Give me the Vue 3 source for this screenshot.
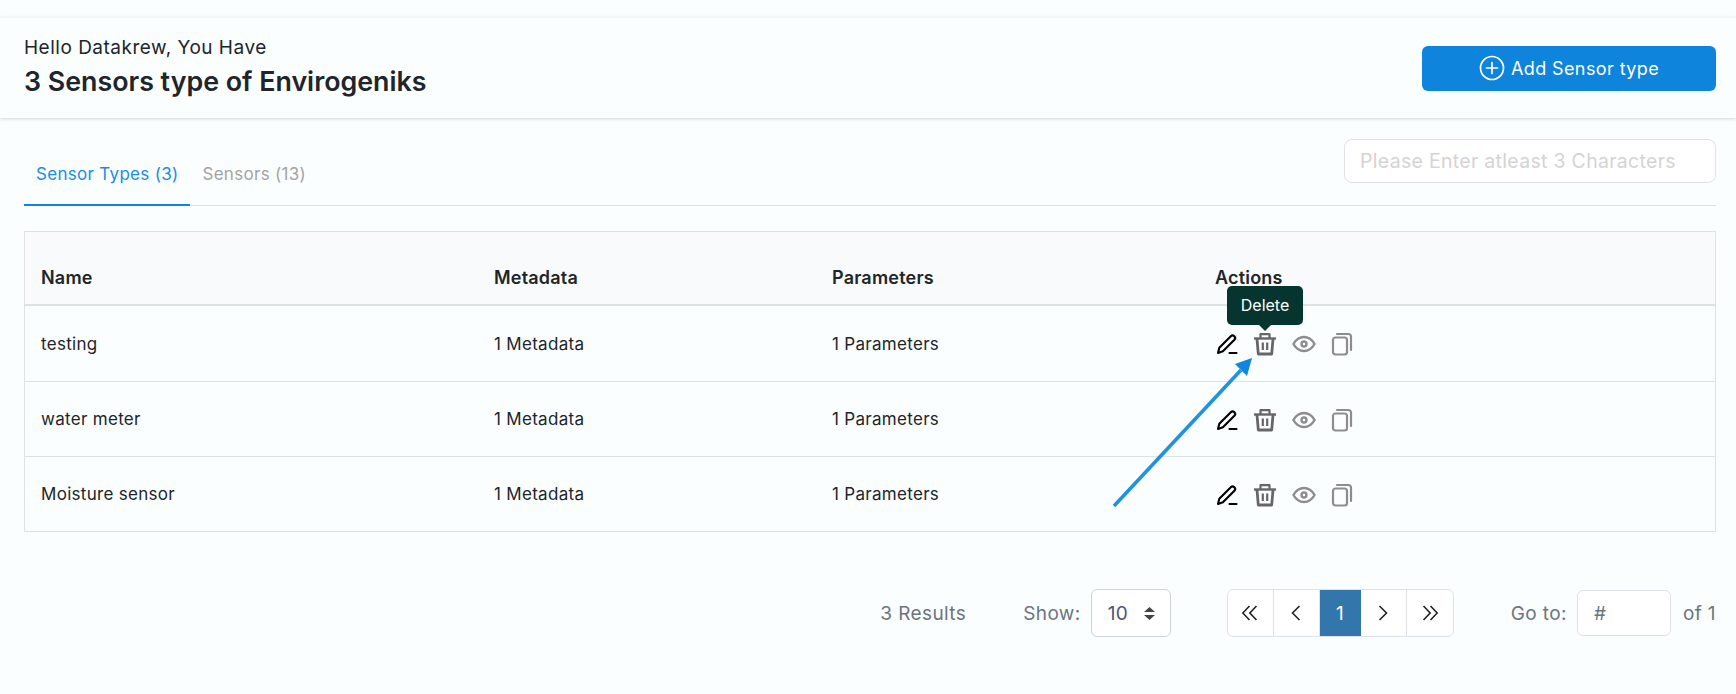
<script setup>
const sensorTypes = [
  { id: 1, name: 'testing', metadata: '1 Metadata', parameters: '1 Parameters' },
  { id: 2, name: 'water meter', metadata: '1 Metadata', parameters: '1 Parameters' },
  { id: 3, name: 'Moisture sensor', metadata: '1 Metadata', parameters: '1 Parameters' },
]
</script>

<template>
  <div class="page">
    <header class="top">
      <div class="top__text">
        <p class="top__hello">Hello Datakrew, You Have</p>
        <h1 class="top__title">3 Sensors type of Envirogeniks</h1>
      </div>
      <button class="add-btn" type="button">
        <svg class="add-btn__icon" viewBox="0 0 26 26" fill="none" stroke="currentColor" stroke-width="1.7" stroke-linecap="round" aria-hidden="true">
          <circle cx="13" cy="13" r="11.5" />
          <path d="M13 7.5v11M7.5 13h11" />
        </svg>
        <span>Add Sensor type</span>
      </button>
    </header>

    <main class="content">
      <div class="tabs">
        <div class="tabs__list">
          <span class="tab tab--active">Sensor Types (3)</span>
          <span class="tab">Sensors (13)</span>
        </div>
        <input class="search" type="text" placeholder="Please Enter atleast 3 Characters" />
      </div>

      <section class="table">
        <div class="row row--head">
          <span>Name</span>
          <span>Metadata</span>
          <span>Parameters</span>
          <span>Actions</span>
        </div>
        <div v-for="(item, index) in sensorTypes" :key="item.id" class="row">
          <span>{{ item.name }}</span>
          <span>{{ item.metadata }}</span>
          <span>{{ item.parameters }}</span>
          <div class="actions">
            <svg class="icon" viewBox="0 0 24 24" fill="none" stroke="#000" stroke-width="2.1" stroke-linecap="round" stroke-linejoin="round" aria-hidden="true">
              <path d="M3 21l1.300-5.200L15.800 4.200a2.500 2.500 0 0 1 3.600 3.500L7.900 19.300 3 21z" />
              <path d="M14.500 21h7" />
            </svg>
            <span class="action-del">
              <span v-if="index === 0" class="tooltip">Delete</span>
              <svg class="icon" viewBox="0 0 24 24" fill="none" stroke="#666" stroke-width="2.800" stroke-linejoin="round" aria-hidden="true">
                <path d="M1 6.500h22" stroke-width="2.400" />
                <path d="M7.500 6V2.200h9V6" stroke-width="2.200" />
                <path d="M4 7l1.300 15h13.400L20 7" />
                <path d="M9.800 10.500v7.500M14.200 10.500v7.500" stroke-width="2.200" />
              </svg>
            </span>
            <svg class="icon" viewBox="0 0 24 24" fill="none" stroke="#8d8d8d" stroke-width="2.400" aria-hidden="true">
              <path d="M1.400 12C4 7.500 7.700 5 12 5s8 2.500 10.600 7C20 16.500 16.300 19 12 19S4 16.500 1.400 12z" />
              <circle cx="12" cy="12" r="2.500" />
            </svg>
            <svg class="icon" viewBox="0 0 24 24" fill="none" stroke="#8d8d8d" stroke-width="2.200" stroke-linecap="round" aria-hidden="true">
              <rect x="3" y="5.500" width="14" height="17" rx="2.500" />
              <path d="M7 2h11.500A2.500 2.500 0 0 1 21 4.500V18" />
            </svg>
          </div>
        </div>
      </section>

      <footer class="pager">
        <span class="pager__results">3 Results</span>
        <span class="pager__show">Show:</span>
        <div class="pager__select">
          <span>10</span>
          <svg width="11" height="13" viewBox="0 0 11 13" fill="#444" aria-hidden="true">
            <path d="M5.500 0L11 5H0zM5.500 13L0 8h11z" />
          </svg>
        </div>
        <nav class="pager__pages">
          <span class="page-btn">
            <svg viewBox="0 0 16 16" fill="none" stroke="#222" stroke-width="1.600" aria-hidden="true"><path d="M7.500 1L.8 8l6.700 7M14.500 1L7.800 8l6.700 7" /></svg>
          </span>
          <span class="page-btn">
            <svg viewBox="0 0 16 16" fill="none" stroke="#222" stroke-width="1.600" aria-hidden="true"><path d="M11.500 1L4.500 8l7 7" /></svg>
          </span>
          <span class="page-btn page-btn--current">1</span>
          <span class="page-btn">
            <svg viewBox="0 0 16 16" fill="none" stroke="#222" stroke-width="1.600" aria-hidden="true"><path d="M4.500 1l7 7-7 7" /></svg>
          </span>
          <span class="page-btn">
            <svg viewBox="0 0 16 16" fill="none" stroke="#222" stroke-width="1.600" aria-hidden="true"><path d="M1.500 1l6.700 7-6.700 7M8.500 1l6.700 7-6.700 7" /></svg>
          </span>
        </nav>
        <span class="pager__goto">Go to:</span>
        <input class="pager__input" type="text" placeholder="#" />
        <span class="pager__of">of 1</span>
      </footer>
    </main>

    <svg class="arrow" width="160" height="160" viewBox="0 0 160 160" aria-hidden="true">
      <path d="M4 148L131 12" stroke="#2093e0" stroke-width="3.600" fill="none" />
      <path d="M142 0L125 6l12 12z" fill="#1087dd" />
    </svg>
  </div>
</template>

<style>
html,
body {
  margin: 0;
  background: #fbfeff;
}
</style>

<style scoped>
.page {
  position: relative;
  width: 1736px;
  height: 694px;
  overflow: hidden;
  padding-top: 17px;
  box-sizing: border-box;
  background: #fbfeff;
  color: #212529;
  font-family: Inter, 'Liberation Sans', sans-serif;
}

.top {
  display: flex;
  align-items: center;
  justify-content: space-between;
  height: 101px;
  padding: 0 20px 0 24px;
  box-sizing: border-box;
  border-top: 1px solid #f3f6f7;
  box-shadow: 0 1px 3px rgb(0 0 0 / 0.16);
}

.top__text {
  padding-bottom: 3px;
}

.top__hello {
  margin: 0 0 6px;
  font-size: 19px;
  letter-spacing: 0.5px;
  line-height: 22px;
}

.top__title {
  margin: 0;
  font-size: 26.8px;
  font-weight: 600;
  line-height: 32px;
}

.add-btn {
  display: flex;
  align-items: center;
  justify-content: center;
  gap: 6px;
  width: 294px;
  height: 45px;
  border: 0;
  border-radius: 6px;
  background: #0f84dc;
  color: #fff;
  font: 400 18px Inter, 'Liberation Sans', sans-serif;
  letter-spacing: 0.4px;
}

.add-btn__icon {
  width: 26px;
  height: 26px;
}

.content {
  padding: 21px 20px 0 24px;
}

.tabs {
  display: flex;
  align-items: flex-end;
  justify-content: space-between;
  height: 66px;
  border-bottom: 1px solid #dee2e6;
}

.tabs__list {
  display: flex;
}

.tab {
  padding: 0 12px;
  height: 48px;
  box-sizing: border-box;
  color: #a3a3a3;
  font-size: 17px;
  letter-spacing: 0.3px;
  line-height: 32px;
  margin-bottom: -1px;
}

.tab--active {
  border-bottom: 2px solid #0f84dc;
  color: #1a8ce0;
}

.search {
  width: 372px;
  height: 44px;
  margin-bottom: 22px;
  padding: 0 15px;
  box-sizing: border-box;
  border: 1px solid #dee2e6;
  border-radius: 8px;
  background: #fff;
  font: 400 19.5px Inter, 'Liberation Sans', sans-serif;
  letter-spacing: 0.3px;
}

.search::placeholder {
  color: #d5d3d3;
  opacity: 1;
}

.table {
  margin-top: 25px;
  border: 1px solid #dee2e6;
}

.row {
  display: grid;
  grid-template-columns: 453px 338px 383px 1fr;
  align-items: center;
  height: 75px;
  padding-left: 16px;
  box-sizing: border-box;
  border-top: 1px solid #dee2e6;
  font-size: 17px;
  letter-spacing: 0.3px;
}

.row--head {
  height: 74px;
  border-top: 0;
  border-bottom: 2px solid #dee2e6;
  background: #f8fafb;
  font-size: 18px;
  font-weight: 600;
  letter-spacing: 0.2px;
  padding-top: 18px;
}

.row--head + .row {
  border-top: 0;
}

.actions {
  display: flex;
  align-items: center;
  gap: 14px;
  margin-top: 1px;
}

.icon {
  display: block;
  width: 24px;
  height: 24px;
  flex: none;
}

.action-del {
  position: relative;
  display: block;
  margin-right: 1px;
}

.tooltip {
  position: absolute;
  left: 50%;
  bottom: 31px;
  width: 76px;
  height: 39px;
  margin-left: -38px;
  border-radius: 5px;
  background: #05352e;
  color: #fff;
  font-size: 16px;
  letter-spacing: 0;
  line-height: 38px;
  text-align: center;
}

.tooltip::after {
  position: absolute;
  top: 100%;
  left: 50%;
  margin-left: -6px;
  border: 6px solid transparent;
  border-top-color: #05352e;
  border-bottom-width: 0;
  content: '';
}

.pager {
  display: flex;
  align-items: center;
  justify-content: flex-end;
  height: 48px;
  margin-top: 57px;
  color: #6c757d;
  font-size: 19px;
  letter-spacing: 0.4px;
}

.pager__results {
  margin-right: 57px;
}

.pager__show {
  margin-right: 10px;
}

.pager__select {
  display: flex;
  align-items: center;
  justify-content: space-between;
  width: 80px;
  height: 48px;
  padding: 0 15px 0 16px;
  box-sizing: border-box;
  border: 1px solid #ced4da;
  border-radius: 6px;
  background: #fff;
  color: #495773;
  margin-right: 56px;
}

.pager__pages {
  display: flex;
  height: 48px;
  box-sizing: border-box;
  border: 1px solid #dee2e6;
  border-radius: 6px;
  background: #fff;
  margin-right: 57px;
  overflow: hidden;
}

.page-btn {
  display: flex;
  align-items: center;
  justify-content: center;
  width: 46px;
  box-sizing: border-box;
  border-right: 1px solid #dee2e6;
}

.page-btn:last-child {
  border-right: 0;
}

.page-btn svg {
  width: 16px;
  height: 16px;
}

.page-btn--current {
  width: 41px;
  border-right: 0;
  background: #3376ab;
  color: #fff;
}

.pager__goto {
  margin-right: 10px;
}

.pager__input {
  width: 94px;
  height: 46px;
  padding: 0 16px;
  box-sizing: border-box;
  border: 1px solid #dee2e6;
  border-radius: 6px;
  background: #fff;
  font: 400 19px Inter, 'Liberation Sans', sans-serif;
}

.pager__input::placeholder {
  color: #6c757d;
  opacity: 1;
}

.pager__of {
  margin-left: 12px;
}

.arrow {
  position: absolute;
  left: 1110px;
  top: 358px;
}
</style>
